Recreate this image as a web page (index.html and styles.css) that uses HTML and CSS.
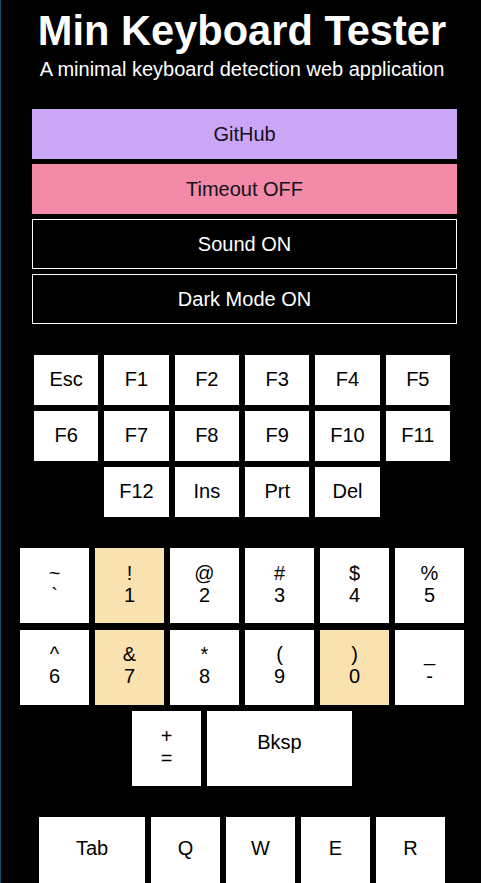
FILE: index.html
```html
<!DOCTYPE html>
<html lang="en">
<head>
<meta charset="utf-8">
<title>Min Keyboard Tester</title>
<link rel="stylesheet" href="styles.css">
</head>
<body>
<div class="app">
  <header class="header">
    <h1 class="title">Min Keyboard Tester</h1>
    <p class="subtitle">A minimal keyboard detection web application</p>
  </header>

  <nav class="controls">
    <a class="btn btn-github">GitHub</a>
    <button class="btn btn-timeout">Timeout OFF</button>
    <button class="btn btn-outline">Sound ON</button>
    <button class="btn btn-outline">Dark Mode ON</button>
  </nav>

  <section class="fn-keys">
    <div class="fkey">Esc</div>
    <div class="fkey">F1</div>
    <div class="fkey">F2</div>
    <div class="fkey">F3</div>
    <div class="fkey">F4</div>
    <div class="fkey">F5</div>
    <div class="fkey">F6</div>
    <div class="fkey">F7</div>
    <div class="fkey">F8</div>
    <div class="fkey">F9</div>
    <div class="fkey">F10</div>
    <div class="fkey">F11</div>
    <div class="fkey fkey-start">F12</div>
    <div class="fkey">Ins</div>
    <div class="fkey">Prt</div>
    <div class="fkey">Del</div>
  </section>

  <section class="key-block">
    <div class="key-row">
      <div class="key"><span>~</span><span>`</span></div>
      <div class="key key-hit"><span>!</span><span>1</span></div>
      <div class="key"><span>@</span><span>2</span></div>
      <div class="key"><span>#</span><span>3</span></div>
      <div class="key"><span>$</span><span>4</span></div>
      <div class="key"><span>%</span><span>5</span></div>
    </div>
    <div class="key-row">
      <div class="key"><span>^</span><span>6</span></div>
      <div class="key key-hit"><span>&amp;</span><span>7</span></div>
      <div class="key"><span>*</span><span>8</span></div>
      <div class="key"><span>(</span><span>9</span></div>
      <div class="key key-hit"><span>)</span><span>0</span></div>
      <div class="key"><span>_</span><span>-</span></div>
    </div>
    <div class="key-row">
      <div class="key"><span>+</span><span>=</span></div>
      <div class="key key-single key-bksp">Bksp</div>
    </div>
  </section>

  <section class="key-block">
    <div class="key-row">
      <div class="key key-single key-tab">Tab</div>
      <div class="key key-single">Q</div>
      <div class="key key-single">W</div>
      <div class="key key-single">E</div>
      <div class="key key-single">R</div>
    </div>
    <div class="key-row">
      <div class="key key-single">T</div>
      <div class="key key-single">Y</div>
      <div class="key key-single">U</div>
      <div class="key key-single">I</div>
      <div class="key key-single">O</div>
    </div>
  </section>
</div>
</body>
</html>
```
FILE: styles.css
```css
* {
  box-sizing: border-box;
}

html {
  background: #000;
}

body {
  margin: 0;
  min-height: 100vh;
  background: #000;
  border-left: 1px solid #174a66;
  font-family: "Liberation Sans", Arial, sans-serif;
  color: #fff;
}

.app {
  padding: 0 0 40px 2px;
  display: flex;
  flex-direction: column;
  align-items: center;
}

.header {
  text-align: center;
}

.title {
  margin: 0;
  padding-top: 8px;
  font-size: 41.6px;
  line-height: 46px;
  font-weight: bold;
  color: #fff;
}

.subtitle {
  margin: 4px 0 0;
  font-size: 20px;
  line-height: 23px;
  color: #fff;
}

.controls {
  align-self: stretch;
  margin: 28px 24px 0 29px;
  display: flex;
  flex-direction: column;
  gap: 5px;
}

.btn {
  display: flex;
  align-items: center;
  justify-content: center;
  height: 50px;
  width: 100%;
  margin: 0;
  padding: 0;
  border: 0;
  font-family: "Liberation Sans", Arial, sans-serif;
  font-size: 20px;
  line-height: 23px;
  color: #000;
  text-decoration: none;
}

.btn-github {
  background: #cba6f7;
  color: #11111b;
}

.btn-timeout {
  background: #f38ba8;
  color: #11111b;
}

.btn-outline {
  background: #000;
  color: #fff;
  border: 1px solid #fff;
}

.fn-keys {
  margin-top: 31px;
  width: 416px;
  display: grid;
  grid-template-columns: repeat(6, 1fr);
  gap: 6px;
}

.fkey {
  height: 50px;
  padding-bottom: 3px;
  background: #fff;
  color: #000;
  font-size: 20px;
  line-height: 22px;
  display: flex;
  align-items: center;
  justify-content: center;
}

.fkey-start {
  grid-column-start: 2;
}

.key-block {
  margin-top: 31px;
  display: flex;
  flex-direction: column;
  gap: 6.5px;
}

.key-row {
  display: flex;
  justify-content: center;
  gap: 6px;
}

.key {
  width: 69px;
  height: 75px;
  padding-bottom: 4px;
  background: #fff;
  color: #000;
  font-size: 20px;
  line-height: 22px;
  display: flex;
  flex-direction: column;
  align-items: center;
  justify-content: center;
}

.key-single {
  padding-bottom: 13px;
}

.key-hit {
  background: #f9e2af;
}

.key-bksp {
  width: 145px;
}

.key-tab {
  width: 106px;
}
```
